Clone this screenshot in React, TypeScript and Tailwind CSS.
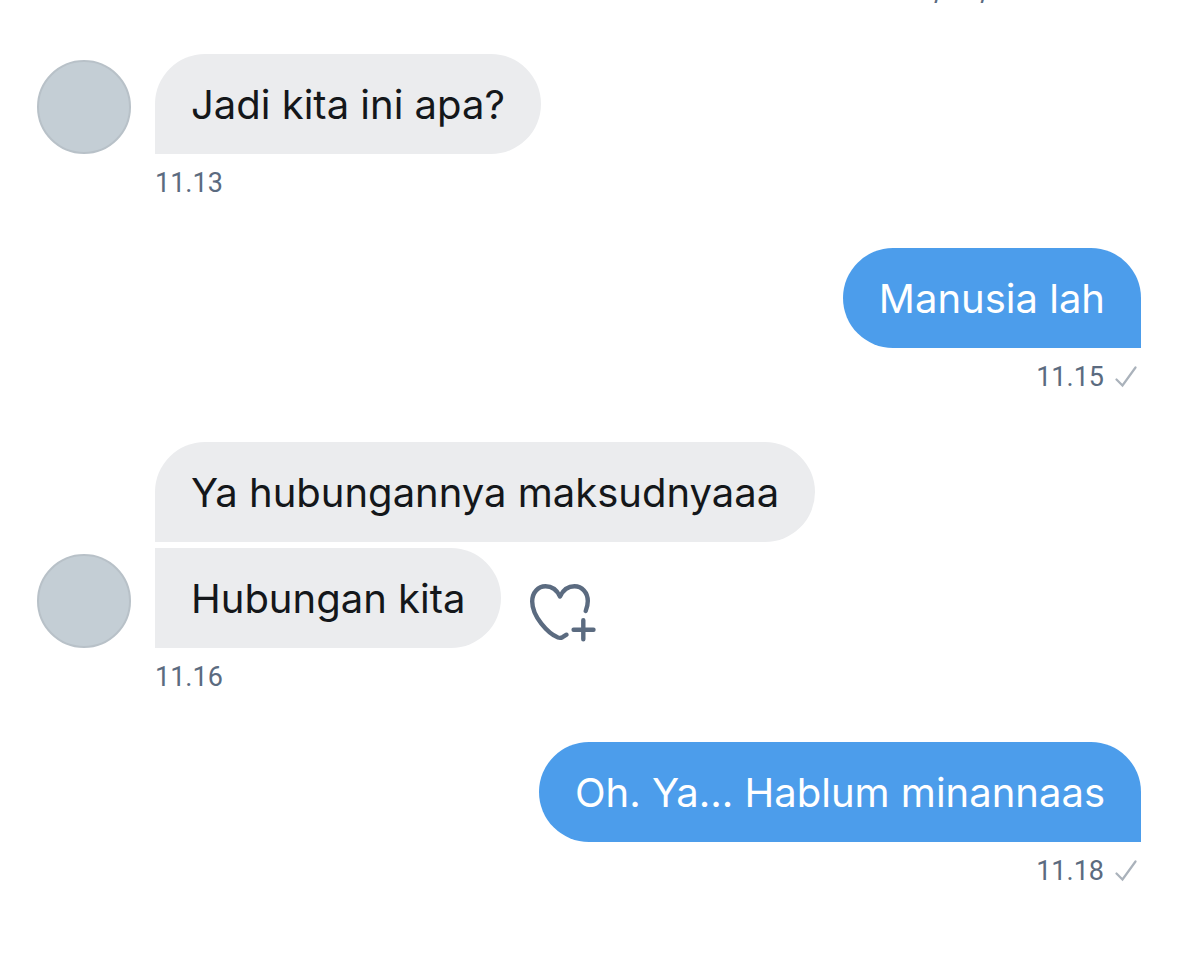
import React from 'react'
import clsx from 'clsx'

type MessageGroupProps = {
  side: 'left' | 'right'
  time: string
  children: React.ReactNode
}

export default function App() {
  return (
    <main className="bg-white font-['Inter','Liberation_Sans',sans-serif] pl-[37px] pr-[59px] pb-20">
      <ScrolledDate />

      <div className="flex flex-col gap-[47px] pt-[50px]">
        <MessageGroup side="left" time="11.13">
          <div className="flex items-end gap-6">
            <Avatar />
            <Bubble side="left">Jadi kita ini apa?</Bubble>
          </div>
        </MessageGroup>

        <MessageGroup side="right" time="11.15">
          <Bubble side="right">Manusia lah</Bubble>
        </MessageGroup>

        <MessageGroup side="left" time="11.16">
          <div className="flex items-end gap-6">
            <Avatar />
            <div className="flex flex-col items-start gap-[6px]">
              <Bubble side="left">Ya hubungannya maksudnyaaa</Bubble>
              <div className="flex items-end gap-[29px]">
                <Bubble side="left" stacked>Hubungan kita</Bubble>
                <button type="button" aria-label="Tambah reaksi" className="mb-[6px] cursor-pointer text-[#5b6b80]">
                  <HeartPlusIcon />
                </button>
              </div>
            </div>
          </div>
        </MessageGroup>

        <MessageGroup side="right" time="11.18">
          <Bubble side="right">Oh. Ya... Hablum minannaas</Bubble>
        </MessageGroup>
      </div>
    </main>
  )
}

// Date of the previous message, almost fully scrolled out of view
function ScrolledDate() {
  return (
    <div className="flex h-1 items-end justify-end gap-9 overflow-hidden pr-[151px] text-[28px] leading-7 text-[#5b6b80]">
      <span>/</span>
      <span>/</span>
    </div>
  )
}

function MessageGroup({ side, time, children }: MessageGroupProps) {
  return (
    <section className={clsx('flex flex-col', side === 'left' ? 'items-start' : 'items-end')}>
      {children}
      <div
        className={clsx(
          "mt-[11px] flex items-center gap-[11px] font-['Roboto','Liberation_Sans',sans-serif] text-[27px] leading-9 text-[#5b6b80]",
          side === 'left' ? 'ml-[118px]' : 'mr-1'
        )}
      >
        <time>{time}</time>
        {side === 'right' && <CheckIcon />}
      </div>
    </section>
  )
}

function Bubble({ side, stacked, children }: { side: 'left' | 'right'; stacked?: boolean; children: React.ReactNode }) {
  return (
    <p
      className={clsx(
        'rounded-[50px] px-9 pt-[27px] pb-[25px] text-[40px] leading-[48px]',
        side === 'left' ? 'rounded-bl-none bg-[#ebecee] text-[#14171a]' : 'rounded-br-none bg-[#4c9deb] text-white',
        stacked && 'rounded-tl-none'
      )}
    >
      {children}
    </p>
  )
}

function Avatar() {
  return <div className="size-[94px] shrink-0 rounded-full border-2 border-[#b8c1c8] bg-[#c4ced5]" />
}

function CheckIcon() {
  return (
    <svg width="22" height="22" viewBox="0 0 22 22" fill="none" stroke="#aab2bb" strokeWidth="2.2" strokeLinecap="round">
      <path d="M1.5 13.5 7.5 19.5 20.5 1.5" />
    </svg>
  )
}

function HeartPlusIcon() {
  return (
    <svg width="66" height="58" viewBox="0 0 66 58" fill="none" stroke="currentColor" strokeWidth="4.4" strokeLinecap="round" strokeLinejoin="round">
      <path d="M36.5 50.7 32.5 53.2Q30.3 54.3 28 53.5C18 49.5 2.2 32.5 2.2 17.5 2.2 8.5 8.2 2.3 15.5 2.3 22.5 2.3 27 6.2 30 12.5 33 6.2 37.5 2.3 44.5 2.3 52 2.3 57.8 8.3 57.8 17 57.8 20.5 57 23.8 55.7 27" />
      <path d="M53.3 36.2V55.3M43.6 45.8H63.5" />
    </svg>
  )
}
